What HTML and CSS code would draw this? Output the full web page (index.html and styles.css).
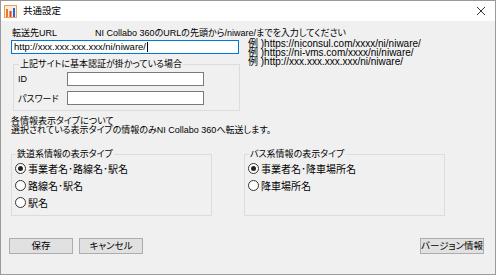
FILE: index.html
```html
<!DOCTYPE html>
<html>
<head>
    <meta charset="UTF-8">
    <title>共通設定</title>
    <link rel="stylesheet" href="styles.css">
</head>
<body>
<div class="window">
    <div class="titlebar">
        <svg class="app-icon" width="13" height="13" viewBox="0 0 13 13">
            <rect x="0.5" y="0.5" width="12" height="12" fill="#fbeede" stroke="#e9a25a"/>
            <rect x="2" y="4" width="2" height="8" fill="#f07a1a"/>
            <rect x="5.5" y="6" width="2" height="6" fill="#e23a1e"/>
            <rect x="9" y="3" width="2" height="9" fill="#2a62d4"/>
        </svg>
        <span class="title">共通設定</span>
        <svg class="close" width="10" height="10" viewBox="0 0 10 10">
            <path d="M1 1 L9 9 M9 1 L1 9" stroke="#333" stroke-width="1"/>
        </svg>
    </div>
    <div class="content">
        <div class="url-head">
            <span class="url-label">転送先URL</span>
            <span>NI Collabo 360のURLの先頭から/niware/までを入力してください</span>
        </div>
        <div class="url-row">
            <div class="url-left">
                <div class="textbox url focused">http://xxx.xxx.xxx.xxx/ni/niware/<span class="caret"></span></div>
                <fieldset class="group auth">
                    <legend>上記サイトに基本認証が掛かっている場合</legend>
                    <div class="field">
                        <label>ID</label>
                        <div class="textbox"></div>
                    </div>
                    <div class="field">
                        <label>パスワード</label>
                        <div class="textbox"></div>
                    </div>
                </fieldset>
            </div>
            <div class="examples">
                <div>例 )https://niconsul.com/xxxx/ni/niware/</div>
                <div>例 )https://ni-vms.com/xxxx/ni/niware/</div>
                <div>例 )http://xxx.xxx.xxx.xxx/ni/niware/</div>
            </div>
        </div>
        <p class="info">各情報表示タイプについて<br>選択されている表示タイプの情報のみNI Collabo 360へ転送します。</p>
        <div class="types">
            <fieldset class="group type">
                <legend>鉄道系情報の表示タイプ</legend>
                <div class="radio checked"><span class="dot"></span>事業者名･路線名･駅名</div>
                <div class="radio"><span class="dot"></span>路線名･駅名</div>
                <div class="radio"><span class="dot"></span>駅名</div>
            </fieldset>
            <fieldset class="group type">
                <legend>バス系情報の表示タイプ</legend>
                <div class="radio checked"><span class="dot"></span>事業者名･降車場所名</div>
                <div class="radio"><span class="dot"></span>降車場所名</div>
            </fieldset>
        </div>
        <div class="buttons">
            <button class="btn">保存</button>
            <button class="btn">キャンセル</button>
            <button class="btn version">バージョン情報</button>
        </div>
    </div>
</div>
</body>
</html>
```

FILE: styles.css
```css
* {
    margin: 0;
    padding: 0;
    box-sizing: border-box;
}
body {
    font-family: "Liberation Sans", "Noto Sans CJK JP", sans-serif;
    font-size: 9px;
    font-feature-settings: "palt";
    color: #000;
    background: #fff;
}
.window {
    width: 496px;
    height: 275px;
    border: 1px solid #9a9a9a;
    background-color: #f0f0f0;
    display: flex;
    flex-direction: column;
}
.titlebar {
    height: 20px;
    background-color: #fff;
    display: flex;
    align-items: center;
    padding-left: 3px;
}
.app-icon {
    margin-right: 6px;
}
.title {
    font-size: 9.5px;
    line-height: 12px;
}
.close {
    margin-left: auto;
    margin-right: 9px;
}
.content {
    padding: 6px 10px 0 10px;
}
.url-head {
    display: flex;
    height: 12px;
    line-height: 12px;
}
.url-label {
    width: 84px;
    padding-left: 1px;
}
.url-row {
    display: flex;
    align-items: flex-start;
}
.url-left {
    width: 228px;
}
.textbox {
    height: 14px;
    background-color: #fff;
    border: 1px solid #7a7a7a;
}
.textbox.url {
    margin-top: 1px;
    padding-left: 2px;
    font-size: 9.5px;
    line-height: 12px;
    display: flex;
    align-items: center;
}
.textbox.focused {
    border-color: #0078d7;
}
.caret {
    width: 1px;
    height: 10px;
    background-color: #000;
    margin-left: 1px;
}
.examples {
    margin-left: 9px;
    font-size: 10px;
    line-height: 9px;
}
.group {
    border: 1px solid #dcdcdc;
    min-width: 0;
}
.group legend {
    line-height: 12px;
    padding: 0 1px;
    margin-left: 1px;
}
.auth {
    margin: 4px 0 0 2px;
    width: 227px;
    padding: 2px 0 5px 4px;
}
.field {
    display: flex;
    align-items: center;
}
.field + .field {
    margin-top: 5px;
}
.field label {
    width: 49px;
}
.field .textbox {
    width: 137px;
}
.info {
    margin-top: 6px;
    line-height: 9px;
}
.types {
    display: flex;
    gap: 32px;
    margin-top: 13px;
}
.type {
    width: 201px;
    padding: 0 0 4px 3px;
}
.radio {
    height: 17px;
    display: flex;
    align-items: center;
    font-size: 10px;
}
.radio .dot {
    width: 11px;
    height: 11px;
    border: 1px solid #333;
    border-radius: 50%;
    background-color: #fff;
    margin-right: 2px;
    display: flex;
    align-items: center;
    justify-content: center;
}
.radio.checked .dot::after {
    content: "";
    width: 5px;
    height: 5px;
    border-radius: 50%;
    background-color: #222;
}
.buttons {
    display: flex;
    gap: 6px;
    margin: 22px 1px 0 -2px;
}
.btn {
    width: 64px;
    height: 16px;
    padding: 0;
    background-color: #e1e1e1;
    border: 1px solid #adadad;
    font: inherit;
    font-size: 9.5px;
    font-feature-settings: "palt";
    line-height: 14px;
    white-space: nowrap;
    color: #000;
}
.btn.version {
    margin-left: auto;
}
```
